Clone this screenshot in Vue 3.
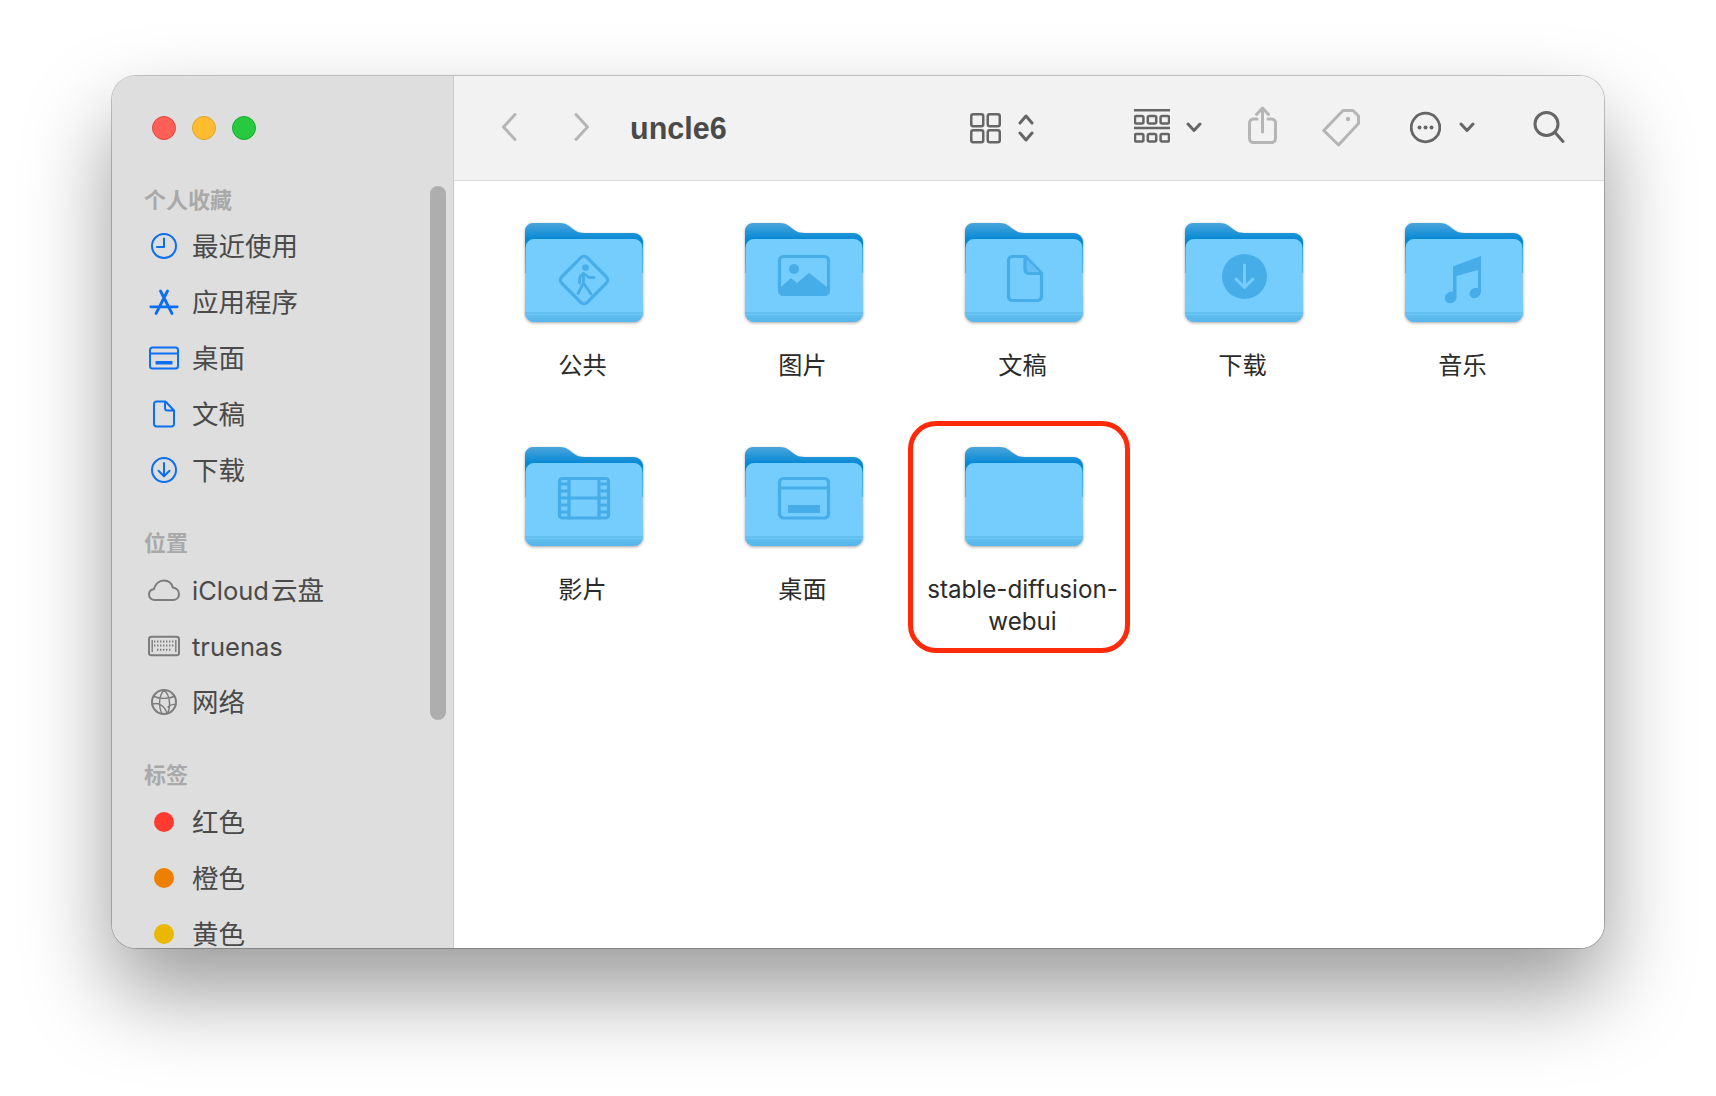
<script setup>
const favorites = [
  { id: 'clock', cjk: '最近使用' },
  { id: 'apps', cjk: '应用程序' },
  { id: 'desktop', cjk: '桌面' },
  { id: 'doc', cjk: '文稿' },
  { id: 'down', cjk: '下载' },
]
const locations = [
  { id: 'cloud', latin: 'iCloud', cjk: '云盘' },
  { id: 'kbd', latin: 'truenas' },
  { id: 'globe', cjk: '网络' },
]
const tags = [
  { color: '#ff3b30', cjk: '红色' },
  { color: '#ee8000', cjk: '橙色' },
  { color: '#eab800', cjk: '黄色' },
]
const folders = [
  { glyph: 'public', label: '公共' },
  { glyph: 'picture', label: '图片' },
  { glyph: 'doc', label: '文稿' },
  { glyph: 'down', label: '下载' },
  { glyph: 'music', label: '音乐' },
  { glyph: 'film', label: '影片' },
  { glyph: 'desktop', label: '桌面' },
  { glyph: 'none', label: 'stable-diffusion-webui', marked: true },
]
</script>

<template>
  <div class="stage">
    <div class="window">
      <aside class="sidebar">
        <div class="lights">
          <span class="light red"></span>
          <span class="light yellow"></span>
          <span class="light green"></span>
        </div>

        <div class="heading first">个人收藏</div>
        <div v-for="it in favorites" :key="it.id" class="row">
          <svg class="side-icon blue" width="32" height="32" viewBox="0 0 32 32">
            <template v-if="it.id === 'clock'">
              <circle cx="16" cy="16" r="12" />
              <path d="M16 8.5V17H9" />
            </template>
            <template v-else-if="it.id === 'apps'">
              <path class="bold" d="M8 27.5 19.500 5M24 27.5 12.500 5M2.800 20.800H29.200" />
            </template>
            <template v-else-if="it.id === 'desktop'">
              <rect x="2" y="5.500" width="28" height="21" rx="2.500" />
              <path d="M2 11.500H30" />
              <rect class="solid" x="7.500" y="19" width="17" height="3.600" rx=".8" />
            </template>
            <template v-else-if="it.id === 'doc'">
              <path d="M9 3.500H17.500L26 12.500V26a2.500 2.500 0 0 1-2.500 2.500H8.500A2.500 2.500 0 0 1 6 26V6a2.500 2.500 0 0 1 3-2.500ZM17 3.500V10a2.500 2.500 0 0 0 2.500 2.500H26" />
            </template>
            <template v-else>
              <circle cx="16" cy="16" r="12" />
              <path d="M16 9V22M10.500 16.800 16 22.300 21.500 16.800" />
            </template>
          </svg>
          <span class="row-label">{{ it.cjk }}</span>
        </div>

        <div class="heading second">位置</div>
        <div v-for="it in locations" :key="it.id" class="row">
          <svg class="side-icon gray" width="32" height="32" viewBox="0 0 32 32">
            <template v-if="it.id === 'cloud'">
              <path d="M7 26C3.400 26 1 23.700 1 20.600 1 17.800 3 15.600 5.800 15.300 7.200 10.200 11 6.500 15.800 6.500 20.200 6.500 23.700 9.300 24.800 13.500 28.400 14 31 16.800 31 20.200 31 23.500 28.400 26 25 26Z" />
            </template>
            <template v-else-if="it.id === 'kbd'">
              <rect x="1" y="6.800" width="30" height="18.400" rx="2.500" />
              <path class="dots" d="M6 11.500H26M6 15.500H26" />
              <path class="dots" d="M9 19.700H23" />
              <path d="M4.200 10.500V21.500" class="thin" />
              <path d="M27.800 10.500V21.500" class="thin" />
            </template>
            <template v-else>
              <circle cx="16" cy="16" r="12" />
              <path class="thin" d="M6 10.500C11 13 21 13 26 10.500M4.500 18C10 16.500 16 19 19 27M16 4C10.500 10 10.500 21 14 27.800M16 4C22 9 23 20 19.500 27.500M27.500 18.500C24 18 21.500 19.500 20 21" />
            </template>
          </svg>
          <span class="row-label">
            <span v-if="it.latin" class="latin">{{ it.latin }}</span>
            <span v-if="it.cjk" :class="{ spaced: it.latin }">{{ it.cjk }}</span>
          </span>
        </div>

        <div class="heading last">标签</div>
        <div v-for="it in tags" :key="it.cjk" class="row">
          <span class="tag-wrap">
            <span class="tag-dot" :style="{ background: it.color }"></span>
          </span>
          <span class="row-label">{{ it.cjk }}</span>
        </div>

        <div class="scrollbar"></div>
      </aside>

      <main class="main">
        <header class="toolbar">
          <svg class="tb faint" width="16" height="44" viewBox="0 0 16 44"><path d="M14 8.500 2.500 21 14 33.500" /></svg>
          <svg class="tb faint m-forward" width="16" height="44" viewBox="0 0 16 44"><path d="M2 8.500 13.500 21 2 33.500" /></svg>
          <span class="title">uncle6</span>
          <span class="spacer"></span>

          <svg class="tb dark" width="31" height="44" viewBox="0 0 31 44">
            <rect x="1.250" y="8.250" width="12" height="12" rx="2" />
            <rect x="17.750" y="8.250" width="12" height="12" rx="2" />
            <rect x="1.250" y="24.250" width="12" height="12" rx="2" />
            <rect x="17.750" y="24.250" width="12" height="12" rx="2" />
          </svg>
          <svg class="tb dark heavy m-updown" width="16" height="44" viewBox="0 0 16 44"><path d="M2 17 8 10 14 17M2 27 8 34 14 27" /></svg>
          <svg class="tb dark m-gallery" width="36" height="44" viewBox="0 0 36 44">
            <path class="heavy-line" d="M0 4.200H36M0 22H36" />
            <rect x="1" y="10" width="8.400" height="7.600" rx="1.500" />
            <rect x="13.800" y="10" width="8.400" height="7.600" rx="1.500" />
            <rect x="26.600" y="10" width="8.400" height="7.600" rx="1.500" />
            <rect x="1" y="28" width="8.400" height="7.600" rx="1.500" />
            <rect x="13.800" y="28" width="8.400" height="7.600" rx="1.500" />
            <rect x="26.600" y="28" width="8.400" height="7.600" rx="1.500" />
          </svg>
          <svg class="tb dark heavy m-chev" width="16" height="44" viewBox="0 0 16 44"><path d="M2 18 8 24.500 14 18" /></svg>
          <svg class="tb faint m-share" width="29" height="44" viewBox="0 0 29 44">
            <path d="M9 13H5.500A4 4 0 0 0 1.500 17V32.500A4 4 0 0 0 5.500 36.500H23.500A4 4 0 0 0 27.500 32.500V17A4 4 0 0 0 23.500 13H20M14.500 26V2.500M8.500 8.500 14.500 2 20.500 8.500" />
          </svg>
          <svg class="tb faint m-tag" width="38" height="44" viewBox="0 0 38 44">
            <path d="M21 4.500H31L36.500 10V17.500L16.500 39 1.800 24.500Z" />
            <circle class="dot-fill" cx="26" cy="13" r="2.200" />
          </svg>
          <svg class="tb dark more-ring m-more" width="31" height="44" viewBox="0 0 31 44">
            <circle cx="15.500" cy="21.500" r="14.300" />
            <circle class="dot-dark" cx="9.500" cy="21.500" r="2" />
            <circle class="dot-dark" cx="15.500" cy="21.500" r="2" />
            <circle class="dot-dark" cx="21.500" cy="21.500" r="2" />
          </svg>
          <svg class="tb dark heavy m-chev2" width="16" height="44" viewBox="0 0 16 44"><path d="M2 18 8 24.500 14 18" /></svg>
          <svg class="tb dark heavy m-search" width="32" height="44" viewBox="0 0 32 44">
            <circle cx="13.500" cy="18" r="11.500" />
            <path d="M22 26.500 30 35.500" />
          </svg>
        </header>

        <section class="grid">
          <div v-for="f in folders" :key="f.label" class="item">
            <svg class="folder" width="118" height="99" viewBox="0 0 118 99">
              <defs>
                <linearGradient id="backFill" gradientUnits="userSpaceOnUse" x1="0" y1="0" x2="0" y2="17">
                  <stop offset="0" stop-color="#4ba5dc" />
                  <stop offset="1" stop-color="#0288d4" />
                </linearGradient>
                <linearGradient id="bandFill" x1="0" y1="0" x2="0" y2="1">
                  <stop offset="0" stop-color="#64c1f1" />
                  <stop offset="1" stop-color="#56b5ea" />
                </linearGradient>
              </defs>
              <path fill="url(#backFill)" d="M8 0H35C41 0 44 3 48 6 52 9 55 10 60 10H109A9 9 0 0 1 118 19V50H0V8A8 8 0 0 1 8 0Z" />
              <path fill="#74cdfc" d="M9 16H109A8.500 8.500 0 0 1 117.500 24.500L118 90A9 9 0 0 1 109 99H9A9 9 0 0 1 0 90L.5 24.500A8.500 8.500 0 0 1 9 16Z" />
              <path fill="url(#bandFill)" d="M0 89H118V90A9 9 0 0 1 109 99H9A9 9 0 0 1 0 90Z" />
              <rect x="0" y="91" width="118" height="1" fill="#6cc6f6" />

              <g class="glyph">
                <template v-if="f.glyph === 'public'">
                  <rect x="41" y="39" width="36" height="36" rx="4.500" transform="rotate(45 59 57)" />
                  <circle class="gf" cx="60.500" cy="44.500" r="3.300" />
                  <path class="gs" d="M58.500 50.500V60L53 70.500M58.500 60 66 71M58.500 50.500 55 53.500 54.500 60M59.500 51 64 54.500H69" />
                </template>
                <template v-else-if="f.glyph === 'picture'">
                  <rect x="34.500" y="33.500" width="49" height="38" rx="4" />
                  <circle class="gf" cx="49" cy="46" r="5" />
                  <path class="gf" d="M36 64 46 55 52 60 64 50 82 64V70H36Z" />
                </template>
                <template v-else-if="f.glyph === 'doc'">
                  <path d="M47 33.500H60.500L76.500 50V73.500A4 4 0 0 1 72.500 77.500H47.500A4 4 0 0 1 43.500 73.500V37A4 4 0 0 1 47 33.500Z" />
                  <path class="fold" d="M60 34.500V46.500A4 4 0 0 0 64 50.500H75.500" />
                </template>
                <template v-else-if="f.glyph === 'down'">
                  <circle class="gf" cx="59.500" cy="53.500" r="22.500" />
                  <path class="ga" d="M59.500 42V64M51 56 59.500 64.500 68 56" />
                </template>
                <template v-else-if="f.glyph === 'music'">
                  <path class="gf" d="M48 43.500 76 33V68C76 73.500 71 76 68 75 63 73.500 63.500 66.500 70 65 71 64.800 72 64.800 73 65.300V47L51.500 53V74C51.500 80 44.500 82 41 78.500 37.500 74 42 68 48 68.500Z" />
                </template>
                <template v-else-if="f.glyph === 'film'">
                  <rect x="34.500" y="31.500" width="49" height="39.500" rx="3" />
                  <path d="M44 31.500V71M74 31.500V71M44 51H74" />
                  <path class="gs" d="M36 37H42.500M36 44H42.500M36 51H42.500M36 58H42.500M36 65H42.500M75.500 37H82M75.500 44H82M75.500 51H82M75.500 58H82M75.500 65H82" />
                </template>
                <template v-else-if="f.glyph === 'desktop'">
                  <rect x="34.500" y="31.500" width="49" height="39.500" rx="4" />
                  <path d="M34.500 41H83.500" />
                  <rect class="gf" x="43" y="58" width="32" height="8" rx="1" />
                </template>
              </g>
            </svg>
            <div class="name">{{ f.label }}</div>
            <div v-if="f.marked" class="marker"></div>
          </div>
        </section>
      </main>
    </div>
  </div>
</template>

<style>
html, body { margin: 0; background: #fff; }
</style>

<style scoped>
.stage {
  width: 1716px;
  height: 1096px;
  padding: 76px 0 0 112px;
  box-sizing: border-box;
  overflow: hidden;
  background: #fff;
  font-family: Inter, "Noto Sans CJK SC", sans-serif;
}
.window {
  width: 1492px;
  height: 871.500px;
  display: flex;
  border-radius: 24px;
  overflow: hidden;
  background: #fff;
  box-shadow: 0 0 0 1px rgba(0, 0, 0, 0.22), 0 44px 88px rgba(0, 0, 0, 0.4);
}
.sidebar {
  position: relative;
  flex: 0 0 342px;
  box-sizing: border-box;
  padding: 40px 0 0 0;
  background: #dedede;
  border-right: 1px solid #c9c9c9;
  overflow: hidden;
}
.lights {
  display: flex;
  gap: 16px;
  padding-left: 40px;
}
.light {
  width: 24px;
  height: 24px;
  border-radius: 50%;
  box-sizing: border-box;
}
.red { background: #ff5f57; border: 1px solid #e2463f; }
.yellow { background: #febc2e; border: 1px solid #e1a325; }
.green { background: #28c840; border: 1px solid #14ae2e; }
.heading {
  height: 36px;
  padding-left: 32px;
  line-height: 34px;
  font-size: 22px;
  font-weight: 700;
  color: #a9a9a9;
}
.heading.first { margin-top: 42px; line-height: 36px; }
.heading.second { margin-top: 28px; }
.heading.last { margin-top: 28px; }
.row {
  height: 56px;
  display: flex;
  align-items: center;
  padding-left: 36px;
}
.side-icon {
  flex: none;
  fill: none;
  stroke-width: 2;
  stroke-linecap: round;
  stroke-linejoin: round;
}
.side-icon.blue { stroke: #0a6ff2; }
.side-icon.gray { stroke: #7c7c7c; }
.side-icon .solid { fill: #0a6ff2; stroke: none; }
.side-icon .bold { stroke-width: 2.800; }
.side-icon .thin { stroke-width: 1.400; }
.side-icon .dots { stroke-width: 2; stroke-dasharray: 1.400 1.600; stroke-linecap: butt; }
.row-label {
  margin-left: 12px;
  font-size: 26.500px;
  line-height: 36px;
  color: #4a4a4a;
  white-space: nowrap;
}
.latin { font-size: 25.500px; }
.spaced { margin-left: 2px; }
.tag-wrap {
  flex: none;
  width: 32px;
  height: 32px;
  display: flex;
  align-items: center;
  justify-content: center;
}
.tag-dot {
  width: 20px;
  height: 20px;
  border-radius: 50%;
}
.scrollbar {
  position: absolute;
  left: 318px;
  top: 110px;
  width: 16px;
  height: 534px;
  border-radius: 8px;
  background: #aeaeae;
}
.main {
  flex: 1;
  min-width: 0;
  display: flex;
  flex-direction: column;
}
.toolbar {
  flex: none;
  height: 105px;
  box-sizing: border-box;
  padding: 0 39px 0 47px;
  display: flex;
  align-items: center;
  background: #f2f2f2;
  border-bottom: 1px solid #dcdcdc;
}
.spacer { flex: 1; }
.title {
  margin-left: 40px;
  font-family: "Liberation Sans", sans-serif;
  font-size: 30.500px;
  font-weight: 700;
  color: #4a4a4a;
}
.tb {
  flex: none;
  fill: none;
  stroke-linecap: round;
  stroke-linejoin: round;
}
.tb.faint { stroke: #b5b5b5; stroke-width: 3; }
.tb.dark { stroke: #666; stroke-width: 2.500; }
.tb.heavy { stroke-width: 3; }
.tb.more-ring { stroke-width: 2.800; }
.m-forward { margin-left: 57px; }
.m-updown { margin-left: 17px; }
.m-gallery { margin-left: 100px; }
.m-chev { margin-left: 16px; }
.m-share { margin-left: 46px; }
.m-tag { margin-left: 45px; }
.m-more { margin-left: 50px; }
.m-chev2 { margin-left: 18px; }
.m-search { margin-left: 58px; }
.tb .heavy-line { stroke-width: 2.600; stroke-linecap: butt; }
.tb .dot-fill { fill: #b5b5b5; stroke: none; }
.tb .dot-dark { fill: #666; stroke: none; }
.grid {
  flex: 1;
  padding: 42px 0 0 20px;
  display: grid;
  grid-template-columns: repeat(5, 220px);
  grid-auto-rows: 224px;
  background: #fff;
}
.item {
  position: relative;
  display: flex;
  flex-direction: column;
  align-items: center;
}
.folder {
  flex: none;
  filter: drop-shadow(0 1.500px 1.500px rgba(0, 0, 0, 0.35));
}
.glyph {
  fill: none;
  stroke: #46ade9;
  stroke-width: 3.200;
  stroke-linejoin: round;
  stroke-linecap: round;
}
.glyph .gf { fill: #46ade9; stroke: none; }
.glyph .gs { stroke-width: 2.800; }
.glyph .ga { stroke: #74cdfc; stroke-width: 3; }
.glyph .fold { fill: #62bef4; }
.name {
  width: 208px;
  margin: 28px 3px 0 0;
  text-align: center;
  font-size: 24.200px;
  line-height: 31.500px;
  color: #2b2b2b;
}
.marker {
  position: absolute;
  left: -6px;
  top: -26px;
  width: 222px;
  height: 232px;
  box-sizing: border-box;
  border: 5px solid #ff2a0a;
  border-radius: 28px;
}
</style>
